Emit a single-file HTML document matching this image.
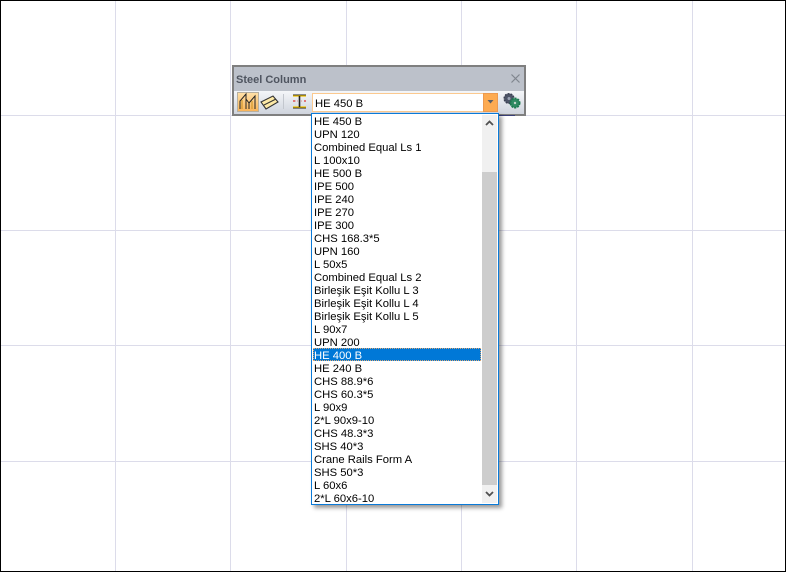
<!DOCTYPE html>
<html><head><meta charset="utf-8"><style>
html,body{margin:0;padding:0;background:#fff}
#r{position:relative;width:786px;height:572px;overflow:hidden;background:#fff;font-family:"Liberation Sans",sans-serif;color:#000}
#r div{position:absolute;box-sizing:border-box}
.v{top:0;width:1px;height:572px;background:#dcdcea}
.h{left:0;height:1px;width:786px;background:#dcdcea}
.t{left:314px;font-size:11.25px;line-height:13px;height:13px;white-space:nowrap}
</style></head><body><div id="r">
<div class="v" style="left:115px"></div><div class="v" style="left:230px"></div><div class="v" style="left:346px"></div><div class="v" style="left:461px"></div><div class="v" style="left:576px"></div><div class="v" style="left:692px"></div>
<div class="h" style="top:115px"></div><div class="h" style="top:230px"></div><div class="h" style="top:345px"></div><div class="h" style="top:461px"></div>
<div style="left:0;top:0;width:786px;height:572px;border:1px solid #000"></div>

<div style="left:232px;top:65px;width:294px;height:51px;border:2px solid #7f7f7f;background:#bcc1ca"></div>
<div style="left:234px;top:91px;width:290px;height:23px;background:linear-gradient(#f4f6f9,#cfd4dd)"></div>
<div style="left:236px;top:73px;font-size:11px;font-weight:bold;color:#4f5560;line-height:14px">Steel Column</div>
<svg style="position:absolute;left:510px;top:73px" width="11" height="11"><path d="M1.5 1.5L9.5 9.5M9.5 1.5L1.5 9.5" stroke="#80858e" stroke-width="1.2"/></svg>

<div style="left:237px;top:92px;width:22px;height:20px;background:linear-gradient(#ffdfa6,#fab55a);border:1px solid #b8b0a0"></div>
<svg style="position:absolute;left:0;top:0" width="786" height="120" fill="none">
<path d="M240 109V101L246 94V109M246 99L249 103V109M249 103L255 96V109" stroke="#222" stroke-width="1"/>
<path d="M242 109V100M252 109V101" stroke="#c98f1e" stroke-width="1"/>
<path d="M261 102L273 96L278 102L266 109Z" fill="#fde9a6" stroke="#333" stroke-width="1.1"/>
<path d="M264 105L276 99" stroke="#333" stroke-width="1"/>
<path d="M283.500 94V109" stroke="#c3c7ce" stroke-width="1"/>
<path d="M293 95H306M293 108H306" stroke="#222" stroke-width="1"/>
<path d="M293 96H306M293 107H306" stroke="#f2c400" stroke-width="1.2"/>
<path d="M299.500 96V107" stroke="#222" stroke-width="1.6"/>
<path d="M293 101H295M304 101H306" stroke="#d33" stroke-width="1.2"/>
<path d="M295 101H298M301 101H303" stroke="#d33" stroke-width=".5" stroke-dasharray="1 1"/>
</svg>

<div style="left:312px;top:93px;width:172px;height:19px;background:#fff;border:1px solid #fbc98f"></div>
<div style="left:315px;top:97px;font-size:11.25px;line-height:14px">HE 450 B</div>
<div style="left:483px;top:93px;width:15px;height:19px;background:#fdab52;border:1px solid #ec9a50"></div>
<svg style="position:absolute;left:487px;top:99px" width="8" height="6"><path d="M0.500 1H6.500L3.500 4.500Z" fill="#5c5f66"/></svg>
<svg style="position:absolute;left:502px;top:92px" width="20" height="18">
<circle cx="7" cy="6.500" r="4.800" fill="#4d5568" stroke="#3c4254" stroke-width="1.500" stroke-dasharray="2 1"/><circle cx="7" cy="6.500" r="1.500" fill="#9aa3b5"/>
<circle cx="13" cy="11" r="4.600" fill="#2f8a63" stroke="#1c7a50" stroke-width="1.800" stroke-dasharray="2 1"/><circle cx="13" cy="11" r="1.200" fill="#c5d5cc"/>
</svg>
<div style="left:498px;top:115px;width:17px;height:1px;background:#3a3f78"></div>

<div style="left:311px;top:113px;width:188px;height:392px;background:#fff;border:1px solid #0a7ad8;box-shadow:3px 3px 4px rgba(0,0,0,.4)"></div>
<div style="left:482px;top:115px;width:15px;height:388px;background:#f0f0f0"></div>
<div style="left:482px;top:172px;width:15px;height:313px;background:#cdcdcd"></div>
<svg style="position:absolute;left:482px;top:115px" width="15" height="388" fill="none">
<path d="M4 10L7.500 6.500L11 10" stroke="#505050" stroke-width="1.800"/>
<path d="M4 377L7.500 380.500L11 377" stroke="#505050" stroke-width="1.800"/>
</svg>
<div style="left:313px;top:348px;width:168px;height:13px;background:#0078d7;outline:1px dotted #d8a878;outline-offset:-1px"></div>

<div class="t" style="top:116px">HE 450 B</div>
<div class="t" style="top:129px">UPN 120</div>
<div class="t" style="top:142px">Combined Equal Ls 1</div>
<div class="t" style="top:155px">L 100x10</div>
<div class="t" style="top:168px">HE 500 B</div>
<div class="t" style="top:181px">IPE 500</div>
<div class="t" style="top:194px">IPE 240</div>
<div class="t" style="top:207px">IPE 270</div>
<div class="t" style="top:220px">IPE 300</div>
<div class="t" style="top:233px">CHS 168.3*5</div>
<div class="t" style="top:246px">UPN 160</div>
<div class="t" style="top:259px">L 50x5</div>
<div class="t" style="top:272px">Combined Equal Ls 2</div>
<div class="t" style="top:285px">Birleşik Eşit Kollu L 3</div>
<div class="t" style="top:298px">Birleşik Eşit Kollu L 4</div>
<div class="t" style="top:311px">Birleşik Eşit Kollu L 5</div>
<div class="t" style="top:324px">L 90x7</div>
<div class="t" style="top:337px">UPN 200</div>
<div class="t" style="top:350px;color:#fff">HE 400 B</div>
<div class="t" style="top:363px">HE 240 B</div>
<div class="t" style="top:376px">CHS 88.9*6</div>
<div class="t" style="top:389px">CHS 60.3*5</div>
<div class="t" style="top:402px">L 90x9</div>
<div class="t" style="top:415px">2*L 90x9-10</div>
<div class="t" style="top:428px">CHS 48.3*3</div>
<div class="t" style="top:441px">SHS 40*3</div>
<div class="t" style="top:454px">Crane Rails Form A</div>
<div class="t" style="top:467px">SHS 50*3</div>
<div class="t" style="top:480px">L 60x6</div>
<div class="t" style="top:493px">2*L 60x6-10</div>
</div></body></html>
